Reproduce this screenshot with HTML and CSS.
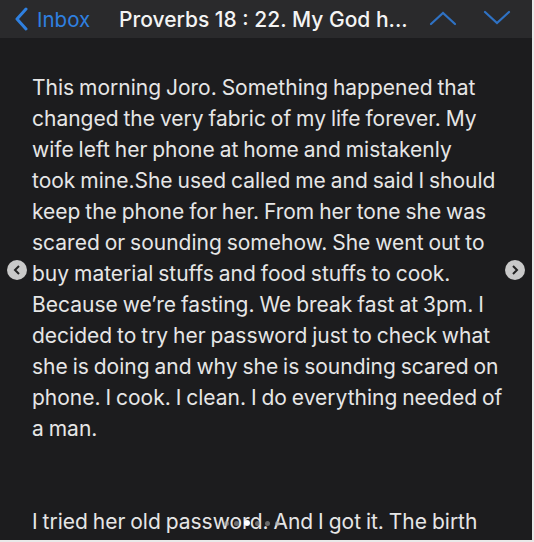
FILE: index.html
```html
<!DOCTYPE html>
<html lang="en">
<head>
    <meta charset="UTF-8">
    <meta name="viewport" content="width=device-width, initial-scale=1.0">
    <title>Proverbs 18 : 22</title>
    <link rel="stylesheet" href="styles.css">
</head>
<body>
    <div class="frame">
        <header class="topbar">
            <a class="back" href="#">
                <svg width="14" height="24" viewBox="0 0 14 24"><path d="M12 2 L3 12 L12 22" fill="none" stroke="#2f80e0" stroke-width="3" stroke-linecap="round" stroke-linejoin="round"/></svg>
                <span>Inbox</span>
            </a>
            <h1 class="title">Proverbs 18 : 22. My God h...</h1>
            <div class="arrows">
                <svg width="28" height="16" viewBox="0 0 28 16"><path d="M2 14 L14 3 L26 14" fill="none" stroke="#2f72c4" stroke-width="2.2" stroke-linecap="round"/></svg>
                <svg width="28" height="16" viewBox="0 0 28 16"><path d="M2 2 L14 13 L26 2" fill="none" stroke="#2f72c4" stroke-width="2.2" stroke-linecap="round"/></svg>
            </div>
        </header>

        <main class="message">
            <p>This morning Joro. Something happened that<br>
            changed the very fabric of my life forever. My<br>
            wife left her phone at home and mistakenly<br>
            took mine.She used called me and said I should<br>
            keep the phone for her. From her tone she was<br>
            scared or sounding somehow. She went out to<br>
            buy material stuffs and food stuffs to cook.<br>
            Because we’re fasting. We break fast at 3pm. I<br>
            decided to try her password just to check what<br>
            she is doing and why she is sounding scared on<br>
            phone. I cook. I clean. I do everything needed of<br>
            a man.</p>
            <p class="gap">I tried her old password. And I got it. The birth</p>

            <button class="nav prev">
                <svg width="8" height="10" viewBox="0 0 8 10"><path d="M6 1 L2 5 L6 9" fill="none" stroke="#222" stroke-width="2"/></svg>
            </button>
            <button class="nav next">
                <svg width="8" height="10" viewBox="0 0 8 10"><path d="M2 1 L6 5 L2 9" fill="none" stroke="#222" stroke-width="2"/></svg>
            </button>
            <div class="dots">
                <span></span><span></span><span class="on"></span><span></span><span></span><span></span>
            </div>
        </main>
    </div>
</body>
</html>
```

FILE: styles.css
```css
* {
    margin: 0;
    padding: 0;
    box-sizing: border-box;
}

body {
    width: 534px;
    height: 542px;
    background: #e9e9e9;
    font-family: 'Inter', 'Noto Sans', sans-serif;
    overflow: hidden;
}

.frame {
    width: 532px;
    height: 540px;
    background: #1c1c1e;
    overflow: hidden;
}

.topbar {
    height: 38px;
    background: #2a2a2c;
    display: flex;
    align-items: center;
    padding-left: 14px;
}

.back {
    display: flex;
    align-items: center;
    gap: 9px;
    color: #2f80e0;
    text-decoration: none;
    font-size: 20.5px;
    width: 105px;
}

.title {
    font-size: 21px;
    font-weight: 500;
    color: #f4f4f4;
    width: 310px;
}

.arrows {
    display: flex;
    gap: 26px;
    margin-top: -2px;
}

.message {
    position: relative;
    height: 502px;
    padding: 34px 20px 0 32px;
    color: #e6e6e6;
    font-size: 21px;
    line-height: 31px;
    word-spacing: -1px;
}

.message p {
    white-space: nowrap;
}

.message .gap {
    margin-top: 62px;
}

.nav {
    position: absolute;
    top: 222px;
    width: 20px;
    height: 20px;
    border: none;
    border-radius: 50%;
    background: #c9c9c9;
    display: flex;
    align-items: center;
    justify-content: center;
}

.prev {
    left: 7px;
}

.next {
    left: 505px;
}

.dots {
    position: absolute;
    top: 482px;
    left: 224px;
    display: flex;
    gap: 5px;
    align-items: center;
}

.dots span {
    width: 5px;
    height: 5px;
    border-radius: 50%;
    background: rgba(160, 160, 160, 0.6);
}

.dots .on {
    width: 6px;
    height: 6px;
    background: #fff;
}
```
